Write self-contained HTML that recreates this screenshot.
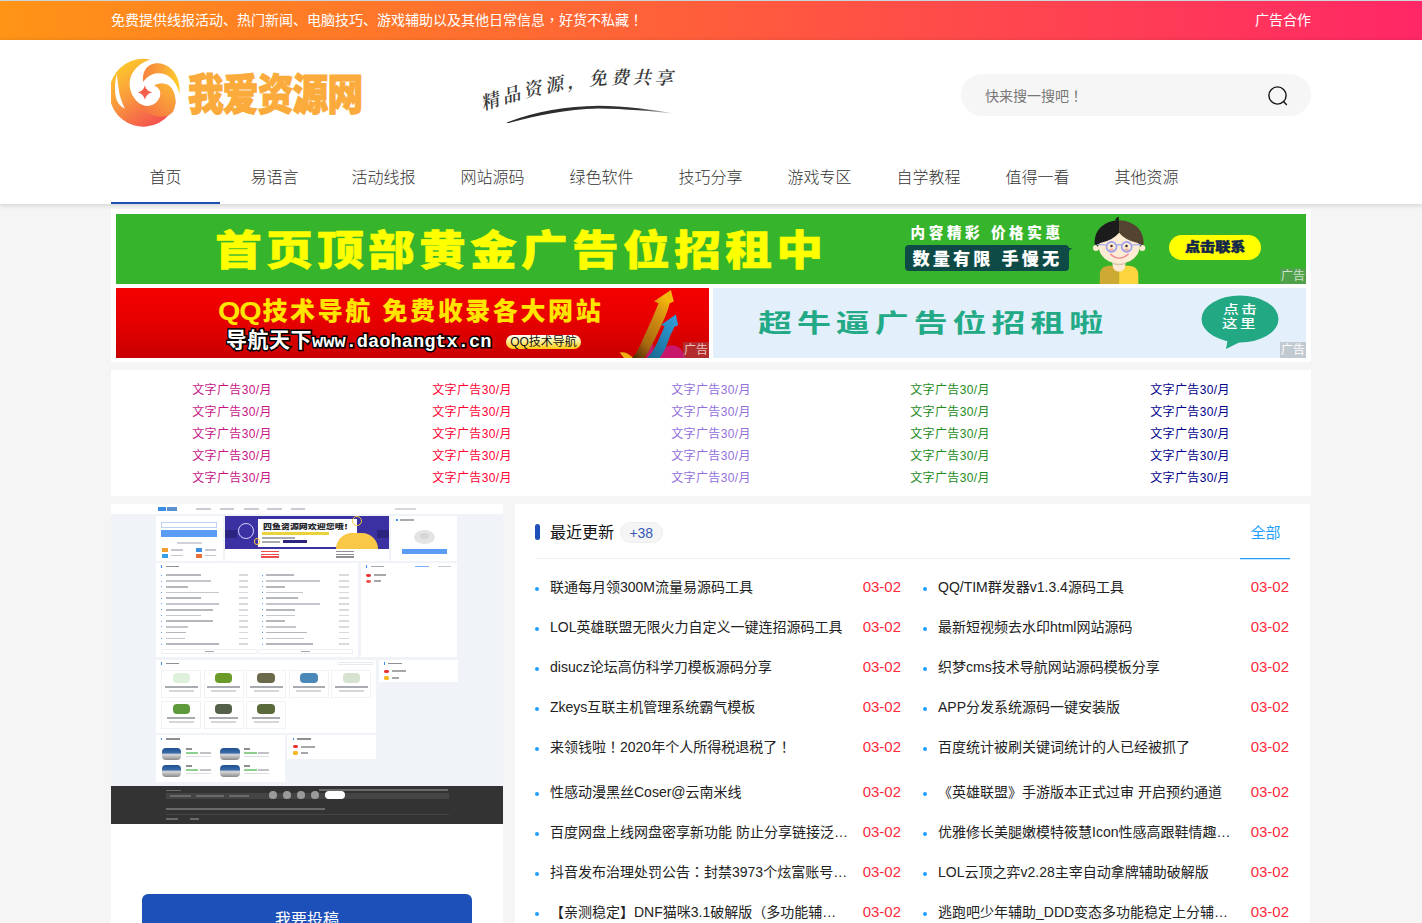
<!DOCTYPE html>
<html lang="zh-CN">
<head>
<meta charset="utf-8">
<title>我爱资源网</title>
<style>
*{margin:0;padding:0;box-sizing:border-box}
html,body{width:1422px;height:923px;overflow:hidden}
body{background:#f5f5f5;font-family:"Liberation Sans","Noto Sans CJK SC",sans-serif;color:#333;position:relative;font-size:14px}
a{text-decoration:none;color:inherit}
.tc{font-family:"Liberation Sans","Noto Sans CJK TC",sans-serif}
/* top bar */
#topbar{position:absolute;left:0;top:0;width:1422px;height:40px;background:linear-gradient(90deg,#ff9416 0%,#ff5f3a 48%,#ff2766 100%);color:#fff;font-size:14px;line-height:40px}
#topbar .l{position:absolute;left:111px;top:0;white-space:nowrap}
#topbar .r{position:absolute;right:111px;top:0;white-space:nowrap}
/* header */
#header{position:absolute;left:0;top:40px;width:1422px;height:164px;background:#fff;box-shadow:0 1px 5px rgba(0,0,0,.17)}
#logo{position:absolute;left:111px;top:18px;width:70px;height:70px}
#logotxt{position:absolute;left:188px;top:27px;font-size:43.5px;line-height:56px;font-weight:900;color:#fbab3b;-webkit-text-stroke:1.2px #fbab3b;white-space:nowrap;transform-origin:0 50%;transform:scaleX(.82);letter-spacing:-1px}
#slogan{position:absolute;left:470px;top:15px;width:220px;height:80px}
#search{position:absolute;left:961px;top:34px;width:350px;height:42px;border-radius:21px;background:#f6f6f6}
#search>span{position:absolute;left:24px;top:0;line-height:44px;font-size:14px;color:#777}
#search svg{position:absolute;left:306px;top:11px}
#nav{position:absolute;left:111px;top:118px;height:46px;white-space:nowrap;font-size:0}
#nav a{display:inline-block;width:109px;height:46px;line-height:39px;text-align:center;font-size:16px;color:#333;font-weight:300}
#nav a.on{border-bottom:2px solid #1e50b4}
/* ads */
#ads{position:absolute;left:111px;top:209px;width:1200px;height:153px;background:#fff}
.adtag{position:absolute;right:0;bottom:0;width:26px;height:16px;background:rgba(128,128,128,.34);color:rgba(255,255,255,.72);font-size:12px;line-height:16px;text-align:center}
#ad1{position:absolute;left:5px;top:5px;width:1190px;height:70px;background:#36b42c;overflow:hidden}
#ad2{position:absolute;left:5px;top:79px;width:593px;height:70px;background:#e60000;overflow:hidden}
#ad3{position:absolute;left:602px;top:79px;width:593px;height:70px;background:#e3effa;overflow:hidden}
#ad1 .t1{position:absolute;left:99px;top:6px;font-size:41px;line-height:62px;font-weight:900;color:#ffff00;white-space:nowrap;letter-spacing:3.75px;transform-origin:0 50%;transform:scaleX(1.14);-webkit-text-stroke:.6px #ffff00}
#ad1 .t2{position:absolute;left:794.5px;top:9.2px;font-size:14.6px;line-height:20px;font-weight:900;color:#fff;white-space:nowrap;letter-spacing:3.6px}
#ad1 .t3{position:absolute;left:789px;top:31px;width:164px;height:26px;border-radius:4px;background:#0f4b46;color:#fff;font-size:17.2px;line-height:28.7px;font-weight:900;white-space:nowrap;letter-spacing:3.1px;padding-left:7.4px;text-align:left}
#ad1 .t3:after{content:"";position:absolute;right:-3px;top:3px;border:3px solid transparent;border-left-color:#0f4b46;border-top-color:#0f4b46}
#ad1 .boy{position:absolute;left:973px;top:0}
#ad1 .pill{position:absolute;left:1053px;top:20.5px;width:92px;height:25px;border-radius:12.5px;background:#ffff00;color:#13264c;font-size:12.6px;line-height:24px;font-weight:900;text-align:center;-webkit-text-stroke:.5px #13264c}
#ad1 .pill span{display:inline-block;transform:scaleX(1.2)}
#ad2{background:linear-gradient(180deg,#f40000 0%,#e80000 45%,#c80000 100%) !important}
#ad2 .q1{position:absolute;left:102px;top:7px;font-size:25px;line-height:32px;font-weight:900;color:#ffe400;white-space:nowrap;letter-spacing:2.6px}
#ad2 .q1 span{display:inline-block;letter-spacing:-1px;transform:scaleX(1.15);transform-origin:0 50%;margin-right:7.6px}
#ad2 .q2{position:absolute;left:110px;top:38px;font-size:21px;line-height:28px;font-weight:700;color:#fff;white-space:nowrap;-webkit-text-stroke:3px #000;paint-order:stroke fill;letter-spacing:.5px}
#ad2 .q2 span{font-family:"Liberation Mono",monospace;font-size:18.7px;letter-spacing:0}
#ad2 .q3{position:absolute;left:390px;top:47px;width:75px;height:14px;border-radius:7px;background:linear-gradient(180deg,#fff 0%,#fff3a0 40%,#ffc90e 100%);color:#111;font-size:12px;line-height:14px;text-align:center;white-space:nowrap}
#ad2 .arr{position:absolute;left:500px;top:0}
#ad3 .c1{position:absolute;left:45px;top:17.5px;font-size:24.5px;line-height:36px;font-weight:700;color:#22a985;white-space:nowrap;letter-spacing:3.6px;transform-origin:0 50%;transform:scaleX(1.385)}
#ad3 .bub{position:absolute;left:485px;top:6px}
#ad3 .c2{position:absolute;left:497px;top:16px;width:60px;text-align:center;font-size:12.3px;line-height:13.7px;color:#fff;letter-spacing:2px;text-indent:2px;white-space:nowrap;font-weight:500;transform:scaleX(1.26)}
/* text ads */
#tads{position:absolute;left:111px;top:370px;width:1200px;height:126px;background:#fff}
#tads ul{position:absolute;top:9px;width:240px;list-style:none;text-align:center;font-size:12px;line-height:22px;letter-spacing:.35px}
/* left panel */
#left{position:absolute;left:111px;top:504px;width:392px;height:440px;background:#fff;overflow:hidden}
#btn{position:absolute;left:31px;top:390px;width:330px;height:50px;border-radius:6px;background:#1e50b9;color:#fff;font-size:16px;text-align:center;line-height:51px}
#thumb{position:absolute;left:0;top:0;width:392px;height:320px;background:#f0f4f9;overflow:hidden}
#thumb i{position:absolute;display:block}
/* right panel */
#right{position:absolute;left:515px;top:504px;width:795px;height:440px;background:#fff;overflow:hidden}
#right .bar{position:absolute;left:20px;top:20px;width:5px;height:16px;border-radius:2.5px;background:#1e50b9}
#right h3{position:absolute;left:35px;top:17px;font-size:16px;font-weight:400;line-height:24px;color:#111}
#right .badge{position:absolute;left:104.5px;top:18px;width:43.5px;height:21px;border-radius:11px;background:#f5f5f5;border:1px solid #eee;color:#3559b7;font-size:14px;line-height:20px;text-align:center}
#right .all{position:absolute;left:735.5px;top:17px;font-size:15px;line-height:24px;color:#1e9fff}
#right .hl{position:absolute;left:20px;top:54px;width:755px;height:1px;background:#f0f0f0}
#right .al{position:absolute;left:725px;top:54px;width:50px;height:1px;background:#1e9fff;box-shadow:0 .5px 0 rgba(30,159,255,.5)}
.row{position:absolute;width:388px;height:40px;line-height:40px;font-size:14px;color:#222;white-space:nowrap}
.row i{position:absolute;left:-.3px;top:20px;width:4px;height:4px;border-radius:50%;background:#1e9fff}
.row b{position:absolute;left:15px;top:0;font-weight:400;max-width:310px;overflow:hidden}
.row em{position:absolute;right:22px;top:0;font-style:normal;color:#ff2a3c;font-size:15px}
</style>
</head>
<body>
<div id="topbar"><i style="position:absolute;left:0;top:0;width:1422px;height:1px;background:#c8d6da"></i><span class="l">免费提供线报活动、热门新闻、电脑技巧、游戏辅助以及其他日常信息<span class="tc" lang="zh-TW">，</span>好货不私藏<span class="tc" lang="zh-TW">！</span></span><span class="r">广告合作</span></div>

<div id="header">
  <svg id="logo" viewBox="69 69 808 808">
    <defs>
      <linearGradient id="g1" x1="0.2" y1="0.05" x2="0.75" y2="0.95"><stop offset="0" stop-color="#fdc92c"/><stop offset=".45" stop-color="#f99a3c"/><stop offset="1" stop-color="#f4524f"/></linearGradient>
      <linearGradient id="g2" x1="0" y1="0.4" x2="1" y2="0.5"><stop offset="0" stop-color="#f7823f"/><stop offset=".55" stop-color="#faa838"/><stop offset="1" stop-color="#fdd02c"/></linearGradient>
      <linearGradient id="g3" x1="0.85" y1="0.05" x2="0.2" y2="0.9"><stop offset="0" stop-color="#fbb336"/><stop offset=".6" stop-color="#f8903d"/><stop offset="1" stop-color="#f67443"/></linearGradient>
    </defs>
    <path fill="url(#g1)" d="M520 85 A392 392 0 1 0 812 600 C816 540 800 470 770 420 C740 380 690 362 630 365 C600 368 580 378 570 385 C600 395 630 420 640 460 C648 520 610 590 540 615 C480 635 420 615 370 570 C300 500 270 400 290 310 C310 220 390 130 520 85 Z"/>
    <path fill="#fff" d="M135 250 C112 360 104 480 140 565 C162 610 195 640 228 655 C205 600 180 540 165 470 C152 400 146 320 135 250 Z"/>
    <path fill="url(#g3)" d="M570 385 C600 368 650 360 700 370 C760 385 800 450 812 540 C816 600 805 650 790 680 C760 730 700 750 620 745 C520 735 440 680 395 610 C420 625 470 635 540 615 C610 590 648 520 640 460 C630 420 600 395 570 385 Z"/>
    <path fill="url(#g2)" d="M440 345 C430 270 450 190 520 150 C590 115 690 125 770 200 C840 270 870 380 860 485 C840 400 800 320 720 270 C640 225 540 240 480 300 C460 320 448 335 440 345 Z"/>
    <path fill="#f4604c" d="M460 385 C470 430 500 455 545 465 C500 478 472 505 460 548 C448 505 420 478 378 465 C422 455 450 430 460 385 Z"/>
  </svg>
  <div id="logotxt">我爱资源网</div>
  <svg id="slogan" viewBox="0 0 1422 517">
    <defs><path id="sp" d="M84 358 C314 281 514 232 734 203 S 1100 190 1400 191"/>
      <linearGradient id="sg" x1="0" x2="1" y1="0" y2="0"><stop offset="0" stop-color="#2a2a2a"/><stop offset=".78" stop-color="#333"/><stop offset="1" stop-color="#333" stop-opacity="0"/></linearGradient></defs>
    <text font-family="'Liberation Serif','Noto Serif CJK SC',serif" font-size="118" font-weight="600" fill="#3a3a3a" letter-spacing="23" font-style="italic"><textPath href="#sp" startOffset="0">精品资源，免费共享</textPath></text>
    <path d="M236 436 C420 364 620 331 830 328 C1000 330 1180 352 1335 381 C1180 362 1000 347 830 345 C620 351 430 389 262 436 Q243 444 236 436 Z" fill="url(#sg)"/>
  </svg>
  <div id="search"><span>快来搜一搜吧<span class="tc" lang="zh-TW">！</span></span>
    <svg width="22" height="22" viewBox="0 0 22 22" fill="none" stroke="#111" stroke-width="1.4"><circle cx="10.5" cy="10.5" r="8.6"/><path d="M16.8 16.8 L19.4 19.4" stroke-linecap="round"/></svg>
  </div>
  <div id="nav"><a class="on">首页</a><a>易语言</a><a>活动线报</a><a>网站源码</a><a>绿色软件</a><a>技巧分享</a><a>游戏专区</a><a>自学教程</a><a>值得一看</a><a>其他资源</a></div>
</div>

<div id="ads">
  <div id="ad1">
    <div class="t1">首页顶部黄金广告位招租中</div>
    <div class="t2">内容精彩 价格实惠</div>
    <div class="t3"><span>数量有限 手慢无</span></div>
    <svg class="boy" width="60" height="70" viewBox="0 0 60 70">
      <path d="M10.8 70 L10.8 60 Q11.5 52 20 51.7 L30.1 51.7 L30.1 70 Z" fill="#cdaa33"/>
      <path d="M30.1 51.7 L40 51.7 Q48.6 52 49.3 60 L49.3 70 L30.1 70 Z" fill="#fdd53e"/>
      <path d="M23.6 47 L36.4 47 L36.4 51 A6.4 6.6 0 0 1 23.6 51 Z" fill="#fdebd3"/>
      <path d="M23.6 48 Q30 51.5 36.4 48 L36.4 50 Q30 52.5 23.6 50 Z" fill="#d9c4b0"/>
      <circle cx="7" cy="34" r="3" fill="#fdebd3"/><circle cx="53.3" cy="34" r="3" fill="#fdebd3"/>
      <ellipse cx="30.2" cy="32" rx="20.6" ry="17.6" fill="#fdebd3"/>
      <path d="M5.6 30.5 Q5 14 20 8 Q26 6 30.1 6.4 L30.1 18.8 Q24 26 13 28.5 Q9 29 8.5 33 L7.5 31 Z" fill="#1b1c1b"/>
      <path d="M30.1 6.4 Q36 6 42 9 Q55 15 54.6 30.5 L52.5 31 L51.5 33 Q51 29 47 28.5 Q36 26 30.1 18.8 Z" fill="#544330"/>
      <path d="M26.2 6.6 Q26.5 3.5 30 2.8 Q29.4 4.5 30.1 6.6 Z" fill="#1b1c1b"/>
      <ellipse cx="22.5" cy="36.1" rx="2.9" ry="1.5" fill="#f9b7a8"/><ellipse cx="37.7" cy="36.1" rx="2.9" ry="1.5" fill="#f9b7a8"/>
      <circle cx="22.5" cy="32.9" r="5" fill="none" stroke="#9aa0ee" stroke-width="1.6"/><circle cx="37.7" cy="32.9" r="5" fill="none" stroke="#9aa0ee" stroke-width="1.6"/>
      <path d="M27.5 31.2 Q30.1 30.2 32.7 31.2 M17.6 31 L8 30.5 M42.6 31 L52 30.5" stroke="#9aa0ee" stroke-width="1.2" fill="none"/>
      <circle cx="22.5" cy="32.1" r="1.25" fill="#3c2a1e"/><circle cx="37.5" cy="32.1" r="1.25" fill="#3c2a1e"/>
      <path d="M21.5 40.2 Q30.2 48 39.2 40.2" stroke="#ee8292" stroke-width="1.2" fill="none" stroke-linecap="round"/>
    </svg>
    <div class="pill"><span>点击联系</span></div>
    <span class="adtag">广告</span></div>
  <div id="ad2">
    <div class="q1"><span>QQ</span>技术导航 免费收录各大网站</div>
    <div class="q2">导航天下<span>www.daohangtx.cn</span></div>
    <div class="q3">QQ技术导航</div>
    <svg class="arr" width="80" height="70" viewBox="0 0 80 70">
      <defs><linearGradient id="ag" x1="0" y1="1" x2=".6" y2="0"><stop offset="0" stop-color="#4a2606"/><stop offset=".3" stop-color="#a8680f"/><stop offset=".62" stop-color="#c98512"/><stop offset=".86" stop-color="#e0a010"/><stop offset="1" stop-color="#f4b80c"/></linearGradient>
      <linearGradient id="bg" x1="0" y1="1" x2=".7" y2="0"><stop offset="0" stop-color="#17688f"/><stop offset="1" stop-color="#2f9bd6"/></linearGradient></defs>
      <path d="M30 70 Q31 58 36 55.7 Q39 57 37.3 62 L34 70 Z" fill="#c2186a"/>
      <path d="M44 70 Q47 58 55 57.3 Q64 57 68 66 L69 70 Z" fill="#c9186c"/>
      <path d="M3.6 64.6 Q10 63 14.8 68 L18 70 L8 70 Z" fill="#eeb010"/>
      <path d="M54.9 2 L57.8 13.6 L53.7 15.2 Q52 22 49.3 28.5 Q45 38 41.3 46.1 Q37.5 54 34.1 60.5 Q31 66 28.5 70 L16 70 Q18.5 67.5 20.5 64.6 Q24.5 57 27.7 49.3 Q32 40 35.7 31.7 Q39.5 23 42.5 15.2 L38.1 13.2 Z" fill="url(#ag)"/>
      <path d="M59.8 26.5 L62.2 37.3 L58.2 38.9 Q57 42.5 54.9 46.1 Q52.5 52 50.1 58.9 Q47 65 43.7 70 L31.2 70 Q34.5 66.5 37.3 62.2 Q41 55.5 43.7 49.3 Q46.5 43.5 48.5 38.1 L44.9 36.9 Z" fill="url(#bg)"/>
    </svg>
    <span class="adtag">广告</span></div>
  <div id="ad3">
    <div class="c1">超牛逼广告位招租啦</div>
    <svg class="bub" width="84" height="56" viewBox="0 0 84 56"><ellipse cx="42" cy="25" rx="38.5" ry="23.5" fill="#22a883"/><path d="M30 44 L28 55 L48 45 Z" fill="#22a883"/></svg>
    <div class="c2">点击<br>这里</div>
    <span class="adtag" style="color:#fff">广告</span></div>
</div>

<div id="tads"><ul style="left:1px;color:#c71585"><li>文字广告30/月</li><li>文字广告30/月</li><li>文字广告30/月</li><li>文字广告30/月</li><li>文字广告30/月</li></ul><ul style="left:241px;color:#ff0033"><li>文字广告30/月</li><li>文字广告30/月</li><li>文字广告30/月</li><li>文字广告30/月</li><li>文字广告30/月</li></ul><ul style="left:480px;color:#9370db"><li>文字广告30/月</li><li>文字广告30/月</li><li>文字广告30/月</li><li>文字广告30/月</li><li>文字广告30/月</li></ul><ul style="left:719px;color:#228b22"><li>文字广告30/月</li><li>文字广告30/月</li><li>文字广告30/月</li><li>文字广告30/月</li><li>文字广告30/月</li></ul><ul style="left:959px;color:#00008b"><li>文字广告30/月</li><li>文字广告30/月</li><li>文字广告30/月</li><li>文字广告30/月</li><li>文字广告30/月</li></ul></div>

<div id="left">
  <div id="thumb"><i style="left:-0.1px;top:-0.1px;width:392.2px;height:10.3px;background:#fff;"></i><i style="left:46.6px;top:2.8px;width:8.0px;height:4.4px;background:#3a8ee6;"></i><i style="left:55.7px;top:3.4px;width:10.0px;height:3.2px;background:#5a8fd0;"></i><i style="left:85.0px;top:4.0px;width:14.8px;height:1.8px;background:#c9cdd3;"></i><i style="left:108.6px;top:4.0px;width:14.8px;height:1.8px;background:#c9cdd3;"></i><i style="left:132.8px;top:4.0px;width:14.8px;height:1.8px;background:#c9cdd3;"></i><i style="left:155.9px;top:4.0px;width:14.8px;height:1.8px;background:#c9cdd3;"></i><i style="left:179.5px;top:4.0px;width:14.8px;height:1.8px;background:#c9cdd3;"></i><i style="left:284.3px;top:4.0px;width:20.7px;height:1.8px;background:#d5d8dc;"></i><i style="left:45.1px;top:11.7px;width:66.5px;height:44.9px;background:#fff;"></i><i style="left:50.1px;top:17.6px;width:56.4px;height:6.5px;background:#fff;border:1px solid #bcd3f3"></i><i style="left:50.1px;top:26.4px;width:56.4px;height:6.5px;background:#5b9cf5;"></i><i style="left:66.4px;top:38.3px;width:24.5px;height:1.5px;background:#d0d4da;"></i><i style="left:51.0px;top:43.6px;width:5.9px;height:4.1px;background:#f0a030;"></i><i style="left:59.9px;top:44.8px;width:11.8px;height:1.8px;background:#c5c9cf;"></i><i style="left:85.0px;top:43.6px;width:5.9px;height:4.1px;background:#3c8fe0;"></i><i style="left:93.8px;top:44.8px;width:10.9px;height:1.8px;background:#c5c9cf;"></i><i style="left:51.0px;top:49.5px;width:5.9px;height:4.1px;background:#35a0e8;"></i><i style="left:59.9px;top:50.7px;width:11.8px;height:1.8px;background:#c5c9cf;"></i><i style="left:85.0px;top:49.5px;width:5.9px;height:4.1px;background:#e8703a;"></i><i style="left:93.8px;top:50.7px;width:10.9px;height:1.8px;background:#c5c9cf;"></i><i style="left:113.9px;top:11.7px;width:163.9px;height:33.4px;background:#3b31a2;"></i><i style="left:147.0px;top:14.6px;width:98.9px;height:28.1px;background:#fff;"></i><i style="left:225.3px;top:29.4px;width:41.3px;height:15.7px;background:#f9c846;border-radius:21px 21px 0 0"></i><b style="position:absolute;left:151.5px;top:18.5px;font-size:14px;line-height:14px;font-weight:900;color:#22222a;white-space:nowrap;transform-origin:0 0;transform:scale(.64,.5)">四鱼资源网欢迎您哦！</b><i style="left:126.8px;top:19.1px;width:15.8px;height:15.8px;border:1px solid #d8d4ff;border-radius:50%"></i><i style="left:241.1px;top:11.9px;width:9.9px;height:9.9px;border:1px solid #f5c93a;border-radius:50%"></i><i style="left:142.5px;top:33.8px;width:6.8px;height:6.8px;border:1px solid #f5c93a;border-radius:50%"></i><i style="left:113.9px;top:25.9px;width:11.7px;height:7.9px;background:#2b2580"></i><i style="left:266.3px;top:25.9px;width:11.7px;height:7.9px;background:#2b2580"></i><i style="left:150.8px;top:27.9px;width:67.0px;height:3.2px;background:#ecd23a;"></i><i style="left:172.1px;top:36.2px;width:23.6px;height:2.7px;background:#2c2680;"></i><i style="left:151.4px;top:33.2px;width:32.5px;height:1.8px;background:#a8abaf;"></i><i style="left:151.4px;top:36.8px;width:17.7px;height:1.8px;background:#a8abaf;"></i><i style="left:113.9px;top:45.0px;width:163.9px;height:11.5px;background:#fff;"></i><i style="left:150.0px;top:46.5px;width:17.7px;height:1.8px;background:#f04a4a;"></i><i style="left:225.3px;top:46.5px;width:17.7px;height:1.8px;background:#8d8f93;"></i><i style="left:150.0px;top:49.5px;width:17.7px;height:1.8px;background:#f04a4a;"></i><i style="left:225.3px;top:49.5px;width:17.7px;height:1.8px;background:#8d8f93;"></i><i style="left:150.0px;top:52.4px;width:17.7px;height:1.8px;background:#f04a4a;"></i><i style="left:225.3px;top:52.4px;width:17.7px;height:1.8px;background:#8d8f93;"></i><i style="left:279.9px;top:11.7px;width:66.5px;height:44.9px;background:#fff;"></i><i style="left:285.2px;top:14.6px;width:2.1px;height:2.4px;background:#3a8ee6;"></i><i style="left:289.1px;top:14.9px;width:13.6px;height:1.8px;background:#a9abae;"></i><i style="left:302.6px;top:25.8px;width:21.3px;height:14.2px;background:#e4e4e4;border-radius:50%"></i><i style="left:308.6px;top:28.8px;width:9.5px;height:6.5px;background:#d4d6d9;border-radius:50%"></i><i style="left:290.8px;top:45.0px;width:45.2px;height:5.0px;background:#5b9cf5;"></i><i style="left:45.1px;top:58.9px;width:201.7px;height:94.5px;background:#fff;"></i><i style="left:50.1px;top:61.3px;width:1.2px;height:2.4px;background:#3a8ee6;"></i><i style="left:54.6px;top:61.6px;width:13.6px;height:1.8px;background:#8d8f93;"></i><i style="left:50.4px;top:70.7px;width:0.9px;height:0.9px;background:#5b9cf5;"></i><i style="left:54.6px;top:70.4px;width:35.4px;height:1.8px;background:#b4b7bc;"></i><i style="left:127.8px;top:70.4px;width:9.5px;height:1.8px;background:#d8dadd;"></i><i style="left:150.8px;top:70.7px;width:0.9px;height:0.9px;background:#5b9cf5;"></i><i style="left:155.0px;top:70.4px;width:27.5px;height:1.8px;background:#b4b7bc;"></i><i style="left:228.2px;top:70.4px;width:9.5px;height:1.8px;background:#d8dadd;"></i><i style="left:50.4px;top:76.5px;width:0.9px;height:0.9px;background:#5b9cf5;"></i><i style="left:54.6px;top:76.2px;width:45.5px;height:1.8px;background:#c4c7cb;"></i><i style="left:127.8px;top:76.2px;width:9.5px;height:1.8px;background:#d8dadd;"></i><i style="left:150.8px;top:76.5px;width:0.9px;height:0.9px;background:#5b9cf5;"></i><i style="left:155.0px;top:76.2px;width:53.5px;height:1.8px;background:#c4c7cb;"></i><i style="left:228.2px;top:76.2px;width:9.5px;height:1.8px;background:#d8dadd;"></i><i style="left:50.4px;top:82.2px;width:0.9px;height:0.9px;background:#5b9cf5;"></i><i style="left:54.6px;top:81.9px;width:22.4px;height:1.8px;background:#b4b7bc;"></i><i style="left:127.8px;top:81.9px;width:9.5px;height:1.8px;background:#d8dadd;"></i><i style="left:150.8px;top:82.2px;width:0.9px;height:0.9px;background:#5b9cf5;"></i><i style="left:155.0px;top:81.9px;width:18.6px;height:1.8px;background:#b4b7bc;"></i><i style="left:228.2px;top:81.9px;width:9.5px;height:1.8px;background:#d8dadd;"></i><i style="left:50.4px;top:87.9px;width:0.9px;height:0.9px;background:#5b9cf5;"></i><i style="left:54.6px;top:87.6px;width:53.2px;height:1.8px;background:#c4c7cb;"></i><i style="left:127.8px;top:87.6px;width:9.5px;height:1.8px;background:#d8dadd;"></i><i style="left:150.8px;top:87.9px;width:0.9px;height:0.9px;background:#5b9cf5;"></i><i style="left:155.0px;top:87.6px;width:37.2px;height:1.8px;background:#c4c7cb;"></i><i style="left:228.2px;top:87.6px;width:9.5px;height:1.8px;background:#d8dadd;"></i><i style="left:50.4px;top:93.7px;width:0.9px;height:0.9px;background:#5b9cf5;"></i><i style="left:54.6px;top:93.4px;width:35.1px;height:1.8px;background:#b4b7bc;"></i><i style="left:127.8px;top:93.4px;width:9.5px;height:1.8px;background:#d8dadd;"></i><i style="left:150.8px;top:93.7px;width:0.9px;height:0.9px;background:#5b9cf5;"></i><i style="left:155.0px;top:93.4px;width:32.2px;height:1.8px;background:#b4b7bc;"></i><i style="left:228.2px;top:93.4px;width:9.5px;height:1.8px;background:#d8dadd;"></i><i style="left:50.4px;top:99.4px;width:0.9px;height:0.9px;background:#5b9cf5;"></i><i style="left:54.6px;top:99.1px;width:53.2px;height:1.8px;background:#c4c7cb;"></i><i style="left:127.8px;top:99.1px;width:9.5px;height:1.8px;background:#d8dadd;"></i><i style="left:150.8px;top:99.4px;width:0.9px;height:0.9px;background:#5b9cf5;"></i><i style="left:155.0px;top:99.1px;width:53.5px;height:1.8px;background:#c4c7cb;"></i><i style="left:228.2px;top:99.1px;width:9.5px;height:1.8px;background:#d8dadd;"></i><i style="left:50.4px;top:105.1px;width:0.9px;height:0.9px;background:#5b9cf5;"></i><i style="left:54.6px;top:104.8px;width:47.5px;height:1.8px;background:#b4b7bc;"></i><i style="left:127.8px;top:104.8px;width:9.5px;height:1.8px;background:#d8dadd;"></i><i style="left:150.8px;top:105.1px;width:0.9px;height:0.9px;background:#5b9cf5;"></i><i style="left:155.0px;top:104.8px;width:28.9px;height:1.8px;background:#b4b7bc;"></i><i style="left:228.2px;top:104.8px;width:9.5px;height:1.8px;background:#d8dadd;"></i><i style="left:50.4px;top:110.8px;width:0.9px;height:0.9px;background:#5b9cf5;"></i><i style="left:54.6px;top:110.6px;width:35.1px;height:1.8px;background:#c4c7cb;"></i><i style="left:127.8px;top:110.6px;width:9.5px;height:1.8px;background:#d8dadd;"></i><i style="left:150.8px;top:110.8px;width:0.9px;height:0.9px;background:#5b9cf5;"></i><i style="left:155.0px;top:110.6px;width:28.9px;height:1.8px;background:#c4c7cb;"></i><i style="left:228.2px;top:110.6px;width:9.5px;height:1.8px;background:#d8dadd;"></i><i style="left:50.4px;top:116.6px;width:0.9px;height:0.9px;background:#5b9cf5;"></i><i style="left:54.6px;top:116.3px;width:47.0px;height:1.8px;background:#b4b7bc;"></i><i style="left:127.8px;top:116.3px;width:9.5px;height:1.8px;background:#d8dadd;"></i><i style="left:150.8px;top:116.6px;width:0.9px;height:0.9px;background:#5b9cf5;"></i><i style="left:155.0px;top:116.3px;width:18.6px;height:1.8px;background:#b4b7bc;"></i><i style="left:228.2px;top:116.3px;width:9.5px;height:1.8px;background:#d8dadd;"></i><i style="left:50.4px;top:122.3px;width:0.9px;height:0.9px;background:#5b9cf5;"></i><i style="left:54.6px;top:122.0px;width:22.4px;height:1.8px;background:#c4c7cb;"></i><i style="left:127.8px;top:122.0px;width:9.5px;height:1.8px;background:#d8dadd;"></i><i style="left:150.8px;top:122.3px;width:0.9px;height:0.9px;background:#5b9cf5;"></i><i style="left:155.0px;top:122.0px;width:29.5px;height:1.8px;background:#c4c7cb;"></i><i style="left:228.2px;top:122.0px;width:9.5px;height:1.8px;background:#d8dadd;"></i><i style="left:50.4px;top:128.0px;width:0.9px;height:0.9px;background:#5b9cf5;"></i><i style="left:54.6px;top:127.7px;width:20.7px;height:1.8px;background:#b4b7bc;"></i><i style="left:127.8px;top:127.7px;width:9.5px;height:1.8px;background:#d8dadd;"></i><i style="left:150.8px;top:128.0px;width:0.9px;height:0.9px;background:#5b9cf5;"></i><i style="left:155.0px;top:127.7px;width:40.5px;height:1.8px;background:#b4b7bc;"></i><i style="left:228.2px;top:127.7px;width:9.5px;height:1.8px;background:#d8dadd;"></i><i style="left:50.4px;top:133.8px;width:0.9px;height:0.9px;background:#5b9cf5;"></i><i style="left:54.6px;top:133.5px;width:19.8px;height:1.8px;background:#c4c7cb;"></i><i style="left:127.8px;top:133.5px;width:9.5px;height:1.8px;background:#d8dadd;"></i><i style="left:150.8px;top:133.8px;width:0.9px;height:0.9px;background:#5b9cf5;"></i><i style="left:155.0px;top:133.5px;width:37.8px;height:1.8px;background:#c4c7cb;"></i><i style="left:228.2px;top:133.5px;width:9.5px;height:1.8px;background:#d8dadd;"></i><i style="left:50.4px;top:139.5px;width:0.9px;height:0.9px;background:#5b9cf5;"></i><i style="left:54.6px;top:139.2px;width:53.5px;height:1.8px;background:#b4b7bc;"></i><i style="left:127.8px;top:139.2px;width:9.5px;height:1.8px;background:#d8dadd;"></i><i style="left:150.8px;top:139.5px;width:0.9px;height:0.9px;background:#5b9cf5;"></i><i style="left:155.0px;top:139.2px;width:47.0px;height:1.8px;background:#b4b7bc;"></i><i style="left:228.2px;top:139.2px;width:9.5px;height:1.8px;background:#d8dadd;"></i><i style="left:50.1px;top:145.2px;width:96.0px;height:5.3px;background:#fff;border:1px solid #eef0f3"></i><i style="left:147.0px;top:145.2px;width:95.4px;height:5.3px;background:#fff;border:1px solid #eef0f3"></i><i style="left:93.8px;top:146.9px;width:8.9px;height:1.5px;background:#a9abae;"></i><i style="left:189.8px;top:146.9px;width:8.9px;height:1.5px;background:#a9abae;"></i><i style="left:249.8px;top:58.9px;width:96.6px;height:94.5px;background:#fff;"></i><i style="left:255.1px;top:61.3px;width:1.2px;height:2.4px;background:#3a8ee6;"></i><i style="left:259.5px;top:61.6px;width:13.6px;height:1.8px;background:#a5a7ab;"></i><i style="left:304.4px;top:61.6px;width:13.9px;height:1.8px;background:#7ab0f0;"></i><i style="left:327.2px;top:61.6px;width:13.3px;height:1.8px;background:#c5c9cf;"></i><i style="left:255.1px;top:69.9px;width:5.0px;height:3.5px;background:#e83030;border-radius:40%"></i><i style="left:263.1px;top:70.4px;width:12.4px;height:2.1px;background:#a5a7ab;"></i><i style="left:255.1px;top:75.8px;width:5.0px;height:3.5px;background:#ee5555;border-radius:40%"></i><i style="left:263.1px;top:76.4px;width:6.5px;height:2.1px;background:#a5a7ab;"></i><i style="left:45.2px;top:155.8px;width:220.3px;height:73.1px;background:#fff;"></i><i style="left:50.2px;top:158.4px;width:1.2px;height:2.4px;background:#3a8ee6;"></i><i style="left:54.7px;top:158.7px;width:13.0px;height:1.8px;background:#8d8f93;"></i><i style="left:225.6px;top:158.1px;width:37.0px;height:3.3px;background:#fff;border:1px solid #e6e9ee;border-radius:3px"></i><i style="left:50.2px;top:166.1px;width:40.2px;height:28.1px;background:#fff;border:1px solid #f0f2f5"></i><i style="left:61.5px;top:169.1px;width:17.7px;height:10.4px;background:#dff0dc;border-radius:4px"></i><i style="left:54.1px;top:182.1px;width:32.5px;height:2.1px;background:#a8abaf;"></i><i style="left:57.9px;top:186.2px;width:24.8px;height:1.8px;background:#d4d6d9;"></i><i style="left:92.5px;top:166.1px;width:40.2px;height:28.1px;background:#fff;border:1px solid #f0f2f5"></i><i style="left:103.8px;top:169.1px;width:17.7px;height:10.4px;background:#6a9a28;border-radius:4px"></i><i style="left:96.4px;top:182.1px;width:32.5px;height:2.1px;background:#a8abaf;"></i><i style="left:100.2px;top:186.2px;width:24.8px;height:1.8px;background:#d4d6d9;"></i><i style="left:135.1px;top:166.1px;width:40.2px;height:28.1px;background:#fff;border:1px solid #f0f2f5"></i><i style="left:146.3px;top:169.1px;width:17.7px;height:10.4px;background:#6b6a4a;border-radius:4px"></i><i style="left:139.0px;top:182.1px;width:32.5px;height:2.1px;background:#a8abaf;"></i><i style="left:142.8px;top:186.2px;width:24.8px;height:1.8px;background:#d4d6d9;"></i><i style="left:177.7px;top:166.1px;width:40.2px;height:28.1px;background:#fff;border:1px solid #f0f2f5"></i><i style="left:188.9px;top:169.1px;width:17.7px;height:10.4px;background:#4a88b8;border-radius:4px"></i><i style="left:181.5px;top:182.1px;width:32.5px;height:2.1px;background:#a8abaf;"></i><i style="left:185.4px;top:186.2px;width:24.8px;height:1.8px;background:#d4d6d9;"></i><i style="left:220.3px;top:166.1px;width:40.2px;height:28.1px;background:#fff;border:1px solid #f0f2f5"></i><i style="left:231.5px;top:169.1px;width:17.7px;height:10.4px;background:#d8e2d0;border-radius:4px"></i><i style="left:224.1px;top:182.1px;width:32.5px;height:2.1px;background:#a8abaf;"></i><i style="left:228.0px;top:186.2px;width:24.8px;height:1.8px;background:#d4d6d9;"></i><i style="left:50.2px;top:197.2px;width:40.2px;height:28.1px;background:#fff;border:1px solid #f0f2f5"></i><i style="left:61.5px;top:200.1px;width:17.7px;height:10.4px;background:#5f9a3a;border-radius:4px"></i><i style="left:56.1px;top:213.1px;width:28.4px;height:2.1px;background:#a8abaf;"></i><i style="left:57.9px;top:217.3px;width:24.8px;height:1.8px;background:#d4d6d9;"></i><i style="left:92.5px;top:197.2px;width:40.2px;height:28.1px;background:#fff;border:1px solid #f0f2f5"></i><i style="left:103.8px;top:200.1px;width:17.7px;height:10.4px;background:#55604a;border-radius:4px"></i><i style="left:98.4px;top:213.1px;width:28.4px;height:2.1px;background:#a8abaf;"></i><i style="left:100.2px;top:217.3px;width:24.8px;height:1.8px;background:#d4d6d9;"></i><i style="left:135.1px;top:197.2px;width:40.2px;height:28.1px;background:#fff;border:1px solid #f0f2f5"></i><i style="left:146.3px;top:200.1px;width:17.7px;height:10.4px;background:#5a6a3a;border-radius:4px"></i><i style="left:141.0px;top:213.1px;width:28.4px;height:2.1px;background:#a8abaf;"></i><i style="left:142.8px;top:217.3px;width:24.8px;height:1.8px;background:#d4d6d9;"></i><i style="left:267.9px;top:155.8px;width:79.0px;height:22.2px;background:#fff;"></i><i style="left:272.9px;top:158.4px;width:1.2px;height:2.4px;background:#3a8ee6;"></i><i style="left:277.1px;top:158.7px;width:13.6px;height:1.8px;background:#8d8f93;"></i><i style="left:272.9px;top:165.8px;width:5.0px;height:3.3px;background:#e83030;border-radius:40%"></i><i style="left:280.6px;top:166.4px;width:14.2px;height:2.1px;background:#a5a7ab;"></i><i style="left:272.9px;top:172.3px;width:5.0px;height:3.3px;background:#f5b820;border-radius:40%"></i><i style="left:280.6px;top:172.9px;width:7.1px;height:2.1px;background:#a5a7ab;"></i><i style="left:45.2px;top:231.2px;width:128.7px;height:46.4px;background:#fff;"></i><i style="left:50.2px;top:233.8px;width:1.2px;height:2.4px;background:#3a8ee6;"></i><i style="left:54.7px;top:234.1px;width:14.2px;height:1.8px;background:#8d8f93;"></i><i style="left:50.5px;top:243.9px;width:19.8px;height:11.8px;background:#2f5f9a;border-radius:4px;background:linear-gradient(180deg,#1f4f8f 0,#3a6aa8 40%,#d8d8d8 55%,#8a8a8a 100%)"></i><i style="left:75.1px;top:243.9px;width:5.9px;height:2.1px;background:#8d8f93;"></i><i style="left:75.1px;top:247.7px;width:12.4px;height:2.7px;background:#fff;border:1px solid #8fd08f"></i><i style="left:89.0px;top:248.0px;width:11.2px;height:1.8px;background:#c0c2c5;"></i><i style="left:75.1px;top:251.9px;width:25.1px;height:1.5px;background:#dcdde0;"></i><i style="left:108.8px;top:243.9px;width:19.8px;height:11.8px;background:#2f5f9a;border-radius:4px;background:linear-gradient(180deg,#1f4f8f 0,#3a6aa8 40%,#d8d8d8 55%,#8a8a8a 100%)"></i><i style="left:133.3px;top:243.9px;width:5.9px;height:2.1px;background:#8d8f93;"></i><i style="left:133.3px;top:247.7px;width:12.4px;height:2.7px;background:#fff;border:1px solid #8fd08f"></i><i style="left:147.2px;top:248.0px;width:11.2px;height:1.8px;background:#c0c2c5;"></i><i style="left:133.3px;top:251.9px;width:25.1px;height:1.5px;background:#dcdde0;"></i><i style="left:50.5px;top:260.8px;width:19.8px;height:11.8px;background:#2f5f9a;border-radius:4px;background:linear-gradient(180deg,#1f4f8f 0,#3a6aa8 40%,#d8d8d8 55%,#8a8a8a 100%)"></i><i style="left:75.1px;top:260.8px;width:5.9px;height:2.1px;background:#8d8f93;"></i><i style="left:75.1px;top:264.6px;width:12.4px;height:2.7px;background:#fff;border:1px solid #8fd08f"></i><i style="left:89.0px;top:264.9px;width:11.2px;height:1.8px;background:#c0c2c5;"></i><i style="left:75.1px;top:268.7px;width:25.1px;height:1.5px;background:#dcdde0;"></i><i style="left:108.8px;top:260.8px;width:19.8px;height:11.8px;background:#2f5f9a;border-radius:4px;background:linear-gradient(180deg,#1f4f8f 0,#3a6aa8 40%,#d8d8d8 55%,#8a8a8a 100%)"></i><i style="left:133.3px;top:260.8px;width:5.9px;height:2.1px;background:#8d8f93;"></i><i style="left:133.3px;top:264.6px;width:12.4px;height:2.7px;background:#fff;border:1px solid #8fd08f"></i><i style="left:147.2px;top:264.9px;width:11.2px;height:1.8px;background:#c0c2c5;"></i><i style="left:133.3px;top:268.7px;width:25.1px;height:1.5px;background:#dcdde0;"></i><i style="left:176.2px;top:231.2px;width:89.3px;height:23.7px;background:#fff;"></i><i style="left:181.8px;top:233.8px;width:1.2px;height:2.4px;background:#3a8ee6;"></i><i style="left:186.0px;top:234.1px;width:13.6px;height:1.8px;background:#8d8f93;"></i><i style="left:181.8px;top:240.9px;width:5.0px;height:3.3px;background:#e83030;border-radius:40%"></i><i style="left:189.5px;top:241.5px;width:14.2px;height:2.1px;background:#a5a7ab;"></i><i style="left:181.8px;top:247.4px;width:5.0px;height:3.3px;background:#f5b820;border-radius:40%"></i><i style="left:189.5px;top:248.0px;width:7.1px;height:2.1px;background:#a5a7ab;"></i><i style="left:-0.1px;top:282.1px;width:392.8px;height:37.9px;background:#333;"></i><i style="left:54.7px;top:288.9px;width:283.3px;height:6.5px;background:#444;"></i><i style="left:54.7px;top:285.6px;width:15.7px;height:1.8px;background:#6a6a6a;"></i><i style="left:59.4px;top:291.2px;width:20.7px;height:1.8px;background:#6a6a6a;"></i><i style="left:84.5px;top:291.2px;width:28.7px;height:1.8px;background:#6a6a6a;"></i><i style="left:117.7px;top:291.2px;width:20.1px;height:1.8px;background:#6a6a6a;"></i><i style="left:207.9px;top:285.0px;width:128.7px;height:1.5px;background:#6a6a6a;"></i><i style="left:54.7px;top:304.2px;width:159.1px;height:1.8px;background:#6a6a6a;"></i><i style="left:54.7px;top:309.9px;width:283.3px;height:0.3px;background:#444;"></i><i style="left:54.7px;top:314.0px;width:12.7px;height:1.8px;background:#6a6a6a;"></i><i style="left:78.6px;top:314.0px;width:9.5px;height:1.8px;background:#6a6a6a;"></i><i style="left:158.2px;top:287.1px;width:7.7px;height:7.7px;background:#9a9a9a;border-radius:50%"></i><i style="left:172.1px;top:287.1px;width:7.7px;height:7.7px;background:#9a9a9a;border-radius:50%"></i><i style="left:186.0px;top:287.1px;width:7.7px;height:7.7px;background:#9a9a9a;border-radius:50%"></i><i style="left:200.2px;top:287.1px;width:7.7px;height:7.7px;background:#9a9a9a;border-radius:50%"></i><i style="left:213.8px;top:287.4px;width:20.1px;height:7.4px;background:#fff;border-radius:4px"></i></div>
  <div id="btn">我要投稿</div>
</div>

<div id="right">
  <span class="bar"></span><h3>最近更新</h3><span class="badge">+38</span>
  <a class="all">全部</a><div class="hl"></div><div class="al"></div>
  <div id="list">
<div class="row" style="left:20px;top:63px"><i></i><b>联通每月领300M流量易源码工具</b><em>03-02</em></div><div class="row" style="left:408px;top:63px"><i></i><b>QQ/TIM群发器v1.3.4源码工具</b><em>03-02</em></div>
<div class="row" style="left:20px;top:103px"><i></i><b>LOL英雄联盟无限火力自定义一键连招源码工具</b><em>03-02</em></div><div class="row" style="left:408px;top:103px"><i></i><b>最新短视频去水印html网站源码</b><em>03-02</em></div>
<div class="row" style="left:20px;top:143px"><i></i><b>disucz论坛高仿科学刀模板源码分享</b><em>03-02</em></div><div class="row" style="left:408px;top:143px"><i></i><b>织梦cms技术导航网站源码模板分享</b><em>03-02</em></div>
<div class="row" style="left:20px;top:183px"><i></i><b>Zkeys互联主机管理系统霸气模板</b><em>03-02</em></div><div class="row" style="left:408px;top:183px"><i></i><b>APP分发系统源码一键安装版</b><em>03-02</em></div>
<div class="row" style="left:20px;top:223px"><i></i><b>来领钱啦<span class="tc" lang="zh-TW">！</span>2020年个人所得税退税了<span class="tc" lang="zh-TW">！</span></b><em>03-02</em></div><div class="row" style="left:408px;top:223px"><i></i><b>百度统计被刷关键词统计的人已经被抓了</b><em>03-02</em></div>
<div class="row" style="left:20px;top:268px"><i></i><b>性感动漫黑丝Coser@云南米线</b><em>03-02</em></div><div class="row" style="left:408px;top:268px"><i></i><b>《英雄联盟》手游版本正式过审 开启预约通道</b><em>03-02</em></div>
<div class="row" style="left:20px;top:308px"><i></i><b>百度网盘上线网盘密享新功能 防止分享链接泛…</b><em>03-02</em></div><div class="row" style="left:408px;top:308px"><i></i><b>优雅修长美腿嫩模特筱慧Icon性感高跟鞋情趣…</b><em>03-02</em></div>
<div class="row" style="left:20px;top:348px"><i></i><b>抖音发布治理处罚公告<span class="tc" lang="zh-TW">：</span>封禁3973个炫富账号…</b><em>03-02</em></div><div class="row" style="left:408px;top:348px"><i></i><b>LOL云顶之弈v2.28主宰自动拿牌辅助破解版</b><em>03-02</em></div>
<div class="row" style="left:20px;top:388px"><i></i><b>【亲测稳定】DNF猫咪3.1破解版（多功能辅…</b><em>03-02</em></div><div class="row" style="left:408px;top:388px"><i></i><b>逃跑吧少年辅助_DDD变态多功能稳定上分辅…</b><em>03-02</em></div>
</div>
</div>
</body>
</html>
